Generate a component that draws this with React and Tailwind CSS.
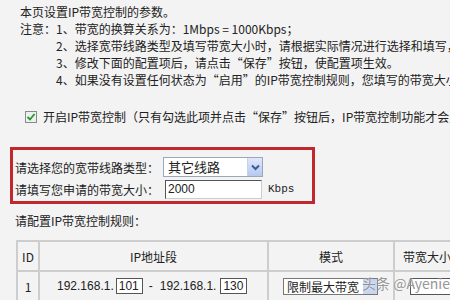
import React from "react";

const Chevron = () => (
  <svg width="9" height="7" viewBox="0 0 9 7">
    <path d="M1 1.5 L4.5 5 L8 1.5" fill="none" stroke="#3a5a9a" strokeWidth="2" />
  </svg>
);

const IpBox = ({ value }) => (
  <span className="inline-flex items-center w-[27px] h-[16px] border border-[#555] bg-white px-[2px] text-[12px] leading-none font-['Liberation_Sans',sans-serif] text-[#222]">
    {value}
  </span>
);

const App = () => {
  return (
    <div className="relative w-[450px] h-[300px] overflow-hidden bg-[#f3f3f3] text-[#222] text-[12px] leading-[17px] font-['Noto_Sans_CJK_SC',sans-serif] whitespace-nowrap">

      {/* NOTES */}
      <div className="pl-[20px] pt-[3px]">
        <p>本页设置IP带宽控制的参数。</p>
        <div className="flex">
          <span className="w-[36px] shrink-0">注意：</span>
          <div>
            <p>1、带宽的换算关系为：1Mbps = 1000Kbps；</p>
            <p>2、选择宽带线路类型及填写带宽大小时，请根据实际情况进行选择和填写，</p>
            <p>3、修改下面的配置项后，请点击“保存”按钮，使配置项生效。</p>
            <p>4、如果没有设置任何状态为“启用”的IP带宽控制规则，您填写的带宽大小</p>
          </div>
        </div>
      </div>

      {/* ENABLE */}
      <div className="flex items-center gap-[6px] pl-[25px] mt-[20px]">
        <span className="flex items-center justify-center w-[12px] h-[12px] border border-[#8a8a8a] bg-[#eef0ee]">
          <svg width="10" height="10" viewBox="0 0 10 10">
            <path d="M1.5 5 L4 7.5 L8.5 2" fill="none" stroke="#1f9a2a" strokeWidth="1.8" />
          </svg>
        </span>
        <span>开启IP带宽控制（只有勾选此项并点击“保存”按钮后，IP带宽控制功能才会生效）</span>
      </div>

      {/* LINE SETTINGS */}
      <div className="ml-[10px] mt-[22px] w-[305px] h-[57px] border-[3px] border-[#c0282e] pl-[2px] pt-[7px]">
        <div className="flex items-center">
          <span className="w-[148px]">请选择您的宽带线路类型：</span>
          <div className="flex w-[100px] h-[20px] border border-[#9aa8bb] bg-white">
            <span className="flex-1 pl-[4px] leading-[18px] text-[13px]">其它线路</span>
            <span className="flex items-center justify-center w-[15px] bg-gradient-to-b from-[#dfe8fb] to-[#b7c9ee] border-l border-[#c6d3ee]">
              <Chevron />
            </span>
          </div>
        </div>
        <div className="flex items-center mt-[3px]">
          <span className="w-[148px]">请填写您申请的带宽大小：</span>
          <span className="ml-[2px] w-[97px] h-[19px] border border-[#555] border-r-[#ccc] border-b-[#ccc] bg-white pl-[2px] leading-[17px] font-['Liberation_Sans',sans-serif]">
            2000
          </span>
          <span className="ml-[6px] text-[11px] font-['Liberation_Mono',monospace]">Kbps</span>
        </div>
      </div>

      {/* RULES */}
      <p className="pl-[15px] mt-[8px]">请配置IP带宽控制规则：</p>

      <table className="ml-[16px] mt-[11px] border-collapse table-fixed w-[480px] border-2 border-[#bcbcbc]">
        <colgroup>
          <col className="w-[22px]" />
          <col className="w-[229px]" />
          <col className="w-[126px]" />
          <col className="w-[103px]" />
        </colgroup>
        <thead>
          <tr className="h-[30px]">
            <th className="border-2 border-[#cdcdcd] font-normal text-center">ID</th>
            <th className="border-2 border-[#cdcdcd] font-normal text-center">IP地址段</th>
            <th className="border-2 border-[#cdcdcd] font-normal text-center">模式</th>
            <th className="border-2 border-[#cdcdcd] font-normal text-left pl-[8px]">带宽大小</th>
          </tr>
        </thead>
        <tbody>
          <tr className="h-[30px]">
            <td className="border-2 border-[#cdcdcd] text-center">1</td>
            <td className="border-2 border-[#cdcdcd] pl-[17px]">
              <div className="flex items-center text-[12px] font-['Liberation_Sans',sans-serif]">
                <span className="mr-[2px]">192.168.1.</span>
                <IpBox value="101" />
                <span className="ml-[6px] mr-[7px]">-</span>
                <span className="mr-[4px]">192.168.1.</span>
                <IpBox value="130" />
              </div>
            </td>
            <td className="border-2 border-[#cdcdcd] pl-[14px]">
              <div className="flex w-[95px] h-[17px] border border-[#777] bg-white">
                <span className="flex-1 pl-[3px] leading-[15px] text-[12px]">限制最大带宽</span>
                <span className="w-[14px] bg-[#c8d6f3]" />
              </div>
            </td>
            <td className="border-2 border-[#cdcdcd] pl-[15px]">
              <div className="w-[80px] h-[17px] border border-[#555] bg-white" />
            </td>
          </tr>
        </tbody>
      </table>

      {/* WATERMARK */}
      <div className="absolute left-[362px] top-[274px] text-[14px] leading-[18px] text-[#8c8c8c] opacity-90 [text-shadow:0_0_2px_#fff] font-['Noto_Sans_CJK_SC',sans-serif]">
        头条 @Ayenie
      </div>
    </div>
  );
};

export default App;
